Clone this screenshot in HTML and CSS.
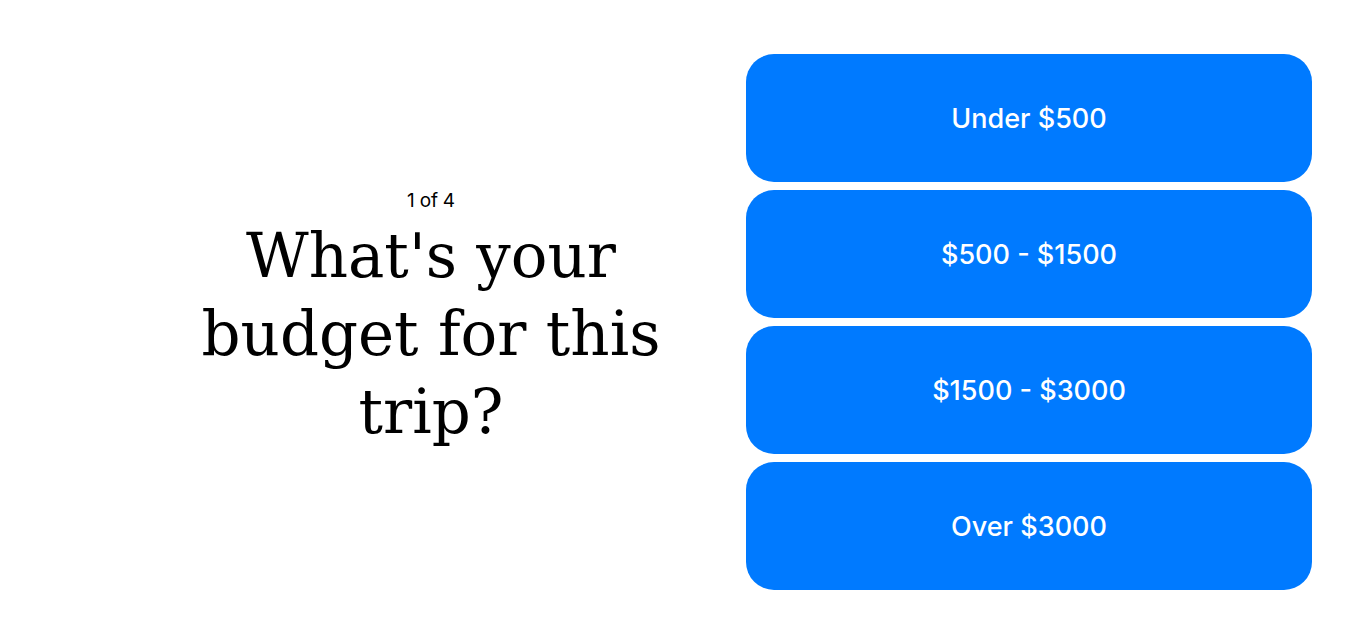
FILE: index.html
```html
<!DOCTYPE html>
<html lang="en">
<head>
<meta charset="utf-8">
<title>Budget</title>
<link rel="stylesheet" href="styles.css">
</head>
<body>
<main class="page">
  <section class="intro">
    <div class="counter">1 of 4</div>
    <h1 class="question">What's your budget for this trip?</h1>
  </section>
  <section class="options">
    <button class="option">Under $500</button>
    <button class="option">$500 - $1500</button>
    <button class="option">$1500 - $3000</button>
    <button class="option">Over $3000</button>
  </section>
</main>
</body>
</html>
```
FILE: styles.css
```css
html, body {
  margin: 0;
  padding: 0;
  background: #ffffff;
}
.page {
  display: flex;
  align-items: center;
  padding: 54px 48px 36px 116px;
  box-sizing: border-box;
  width: 1360px;
  height: 626px;
}
.intro {
  flex: 1;
  display: flex;
  flex-direction: column;
  align-items: center;
  text-align: center;
  margin-bottom: 3px;
}
.counter {
  font-family: Inter, "Liberation Sans", sans-serif;
  font-size: 19px;
  letter-spacing: -0.2px;
  color: #000;
  line-height: 22px;
}
.question {
  margin: 5px 0 0;
  font-family: "DejaVu Serif", Georgia, serif;
  font-weight: normal;
  font-size: 61px;
  line-height: 78px;
  color: #000;
  max-width: 520px;
}
.options {
  width: 566px;
  display: flex;
  flex-direction: column;
  gap: 8px;
}
.option {
  height: 128px;
  border: none;
  border-radius: 28px;
  background: #007aff;
  color: #ffffff;
  font-family: Inter, "Liberation Sans", sans-serif;
  font-size: 27px;
  font-weight: 500;
  padding: 0;
  cursor: pointer;
}
```
